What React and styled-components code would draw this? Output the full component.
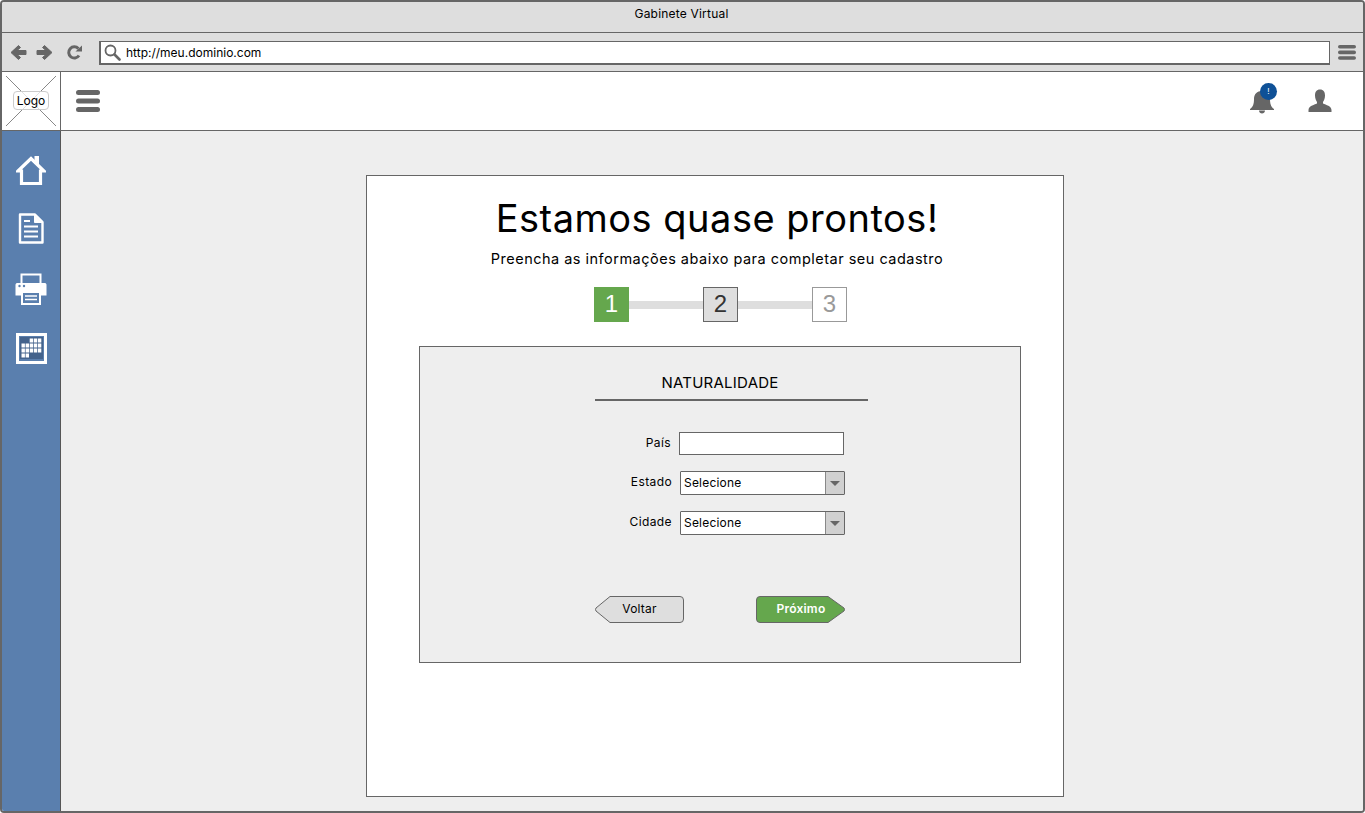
import React from "react";
import styled, { createGlobalStyle } from "styled-components";

const Global = createGlobalStyle`
  html, body { margin: 0; padding: 0; background: #fff; }
  body { font-family: "Inter", "Noto Sans", sans-serif; color: #000; }
  * { box-sizing: border-box; }
`;

const Browser = styled.div`
  width: 1365px;
  height: 813px;
  border: 2px solid #666;
  border-radius: 4px;
  display: flex;
  flex-direction: column;
  overflow: hidden;
`;
const TitleBar = styled.div`
  height: 31px;
  flex: none;
  background: #dedede;
  border-bottom: 1px solid #666;
  display: flex;
  justify-content: center;
  align-items: center;
  padding: 0 2px 7px 0;
  font-size: 12px;
  letter-spacing: 0.2px;
`;
const Toolbar = styled.div`
  height: 39px;
  flex: none;
  background: #dedede;
  border-bottom: 1px solid #666;
  display: flex;
  align-items: center;
  padding: 1px 0 0 8px;
`;
const NavIcons = styled.div`
  display: flex;
  align-items: center;
  gap: 9px;
  width: 89px;
`;
const ReloadSlot = styled.div`
  display: flex;
  margin-left: 4px;
`;
const AddressBar = styled.div`
  width: 1231px;
  height: 24px;
  background: #fff;
  border: 2px solid #666;
  border-width: 1px 1px 2px 2px;
  display: flex;
  align-items: center;
  gap: 5px;
  padding: 1px 0 0 3px;
  font-size: 12px;
`;
const MenuSlot = styled.div`
  margin-left: 8px;
  display: flex;
`;
const Header = styled.div`
  height: 59px;
  flex: none;
  background: #fff;
  border-bottom: 1px solid #666;
  display: flex;
  align-items: center;
`;
const LogoBox = styled.div`
  position: relative;
  width: 59px;
  height: 58px;
  flex: none;
  border-right: 1px solid #666;
  display: flex;
  justify-content: center;
  align-items: center;
`;
const LogoCross = styled.svg`
  position: absolute;
  left: 4px;
  top: 4px;
`;
const LogoLabel = styled.div`
  position: relative;
  width: 36px;
  height: 19px;
  margin-bottom: 1px;
  border: 1px solid #ccc;
  border-radius: 4px;
  background: rgba(255, 255, 255, 0.75);
  font-size: 12px;
  text-align: center;
  line-height: 17px;
`;
const HeaderMenu = styled.div`
  margin-left: 15px;
  display: flex;
  flex: 1;
`;
const HeaderActions = styled.div`
  display: flex;
  align-items: center;
  gap: 34px;
  padding-right: 31px;
`;
const BellWrap = styled.div`
  position: relative;
  width: 24px;
  height: 26px;
`;
const Badge = styled.span`
  position: absolute;
  left: 10px;
  top: -5px;
  width: 17px;
  height: 17px;
  border-radius: 50%;
  background: #0f5197;
  color: #fff;
  font-size: 8px;
  line-height: 17px;
  text-align: center;
`;
const Body = styled.div`
  flex: 1;
  display: flex;
  min-height: 0;
`;
const Sidebar = styled.div`
  width: 59px;
  flex: none;
  background: #5a7fae;
  border-right: 1px solid #555;
  display: flex;
  flex-direction: column;
  align-items: center;
  padding: 24px 0 0 0;
`;
const SideIcon = styled.div`
  height: ${(p) => p.$h}px;
  display: flex;
  justify-content: center;
`;
const Content = styled.div`
  flex: 1;
  background: #eee;
  padding: 44px 0 0 305px;
`;
const Card = styled.div`
  width: 698px;
  height: 622px;
  background: #fff;
  border: 1px solid #666;
  display: flex;
  flex-direction: column;
`;
const Heading = styled.h1`
  margin: 17px 0 0 4px;
  font-size: 38px;
  line-height: 50px;
  font-weight: 400;
  text-align: center;
  letter-spacing: 0.5px;
`;
const Subtitle = styled.p`
  margin: 6px 0 0 4px;
  font-size: 14.5px;
  line-height: 20px;
  text-align: center;
  letter-spacing: 0.49px;
`;
const Stepper = styled.div`
  margin: 18px 0 0 227px;
  display: flex;
  align-items: center;
`;
const Step = styled.div`
  width: 35px;
  height: 35px;
  flex: none;
  display: flex;
  justify-content: center;
  align-items: center;
  padding-bottom: 2px;
  font-size: 24px;
  font-family: "Liberation Sans", sans-serif;
  background: ${(p) => p.$bg};
  color: ${(p) => p.$color};
  border: 1px solid ${(p) => p.$border};
`;
const StepLine = styled.div`
  width: 74px;
  height: 8px;
  flex: none;
  background: #dedede;
`;
const Panel = styled.div`
  margin: 24px 0 0 52px;
  width: 602px;
  height: 317px;
  background: #eee;
  border: 1px solid #666;
  display: flex;
  flex-direction: column;
  align-items: flex-start;
  padding: 0 0 0 175px;
`;
const PanelTitle = styled.div`
  width: 273px;
  height: 54px;
  border-bottom: 2px solid #666;
  padding: 26px 23px 0 0;
  font-size: 15px;
  line-height: 20px;
  text-align: center;
  letter-spacing: 0.25px;
`;
const Row = styled.div`
  display: flex;
  align-items: flex-start;
  margin-top: ${(p) => p.$top}px;
`;
const Label = styled.label`
  width: ${(p) => p.$w}px;
  text-align: right;
  padding-top: 2px;
  font-size: 12px;
  line-height: 17px;
  letter-spacing: 0.4px;
`;
const TextInput = styled.div`
  margin-left: 8px;
  width: 165px;
  height: 23px;
  background: #fff;
  border: 1px solid #666;
`;
const Select = styled.div`
  margin-left: 8px;
  width: 165px;
  height: 24px;
  background: #fff;
  border: 1px solid #666;
  border-radius: 1px;
  display: flex;
  align-items: stretch;
  font-size: 12px;
  letter-spacing: 0.2px;
`;
const SelectText = styled.div`
  flex: 1;
  padding-left: 3px;
  line-height: 21px;
`;
const SelectArrow = styled.div`
  width: 19px;
  background: #d0d0d0;
  border-left: 1px solid #888;
  display: flex;
  justify-content: center;
  align-items: center;
`;
const Buttons = styled.div`
  margin-top: 61px;
  width: 251px;
  display: flex;
  justify-content: space-between;
`;
const ArrowButton = styled.div`
  position: relative;
  width: ${(p) => (p.$back ? 89 : 90)}px;
  height: 27px;
  display: flex;
  justify-content: center;
  align-items: center;
  padding: 0 0 2px 0;
  font-size: 12px;
  letter-spacing: 0.2px;
  color: ${(p) => (p.$back ? "#000" : "#fff")};
  font-weight: ${(p) => (p.$back ? 400 : 600)};
`;
const ButtonShape = styled.svg`
  position: absolute;
  left: 0;
  top: 0;
`;
const ButtonText = styled.span`
  position: relative;
`;

const Menu = ({ w = 24, h = 22, bar = 5, gap = 3.5 }) => (
  <svg width={w} height={h} viewBox={`0 0 ${w} ${h}`}>
    {[0, 1, 2].map((i) => (
      <rect key={i} x="0" y={i * (bar + gap)} width={w} height={bar} rx={bar / 2} fill="#666" />
    ))}
  </svg>
);

const ArrowNav = ({ flip }) => (
  <svg width="17" height="17" viewBox="0 0 17 17" style={flip ? { transform: "scaleX(-1)" } : undefined}>
    <path d="M8.5 1.5 L1 8.5 L8.5 15.5 L10.5 13.5 L7 10.5 H16 V6.5 H7 L10.5 3.5 Z" fill="#666" stroke="#666" strokeLinejoin="round" />
  </svg>
);

const Reload = () => (
  <svg width="17" height="17" viewBox="0 0 17 17">
    <path d="M13 11.5 A5.6 5.6 0 1 1 12.4 4.6" fill="none" stroke="#666" strokeWidth="3" />
    <path d="M9.5 7.5 H16 V1.5 Z" fill="#666" />
  </svg>
);

const Search = () => (
  <svg width="17" height="17" viewBox="0 0 17 17">
    <circle cx="6.5" cy="6.5" r="5" fill="none" stroke="#666" strokeWidth="1.8" />
    <path d="M10.5 10.5 L15.5 15.5" stroke="#666" strokeWidth="2.6" strokeLinecap="round" />
  </svg>
);

const Bell = () => (
  <svg width="24" height="26" viewBox="0 0 24 26">
    <path d="M0 21 C3 19 4 16 4 11 C4 6 7 3 12 3 C17 3 20 6 20 11 C20 16 21 19 24 21 V22 H0 Z" fill="#666" />
    <path d="M9 22.5 H15 C15 24.5 13.5 25.5 12 25.5 C10.5 25.5 9 24.5 9 22.5 Z" fill="#666" />
  </svg>
);

const User = () => (
  <svg width="24" height="24" viewBox="0 0 24 24">
    <path d="M12 0.5 C15.5 0.5 17 3 17 6.5 C17 9.5 16 11.5 15 13 V14.5 C18 16 23.5 17 23.5 21 V23 H0.5 V21 C0.5 17 6 16 9 14.5 V13 C8 11.5 7 9.5 7 6.5 C7 3 8.5 0.5 12 0.5 Z" fill="#666" />
  </svg>
);

const Home = () => (
  <svg width="30" height="31" viewBox="0 0 30 31">
    <path d="M18.5 1 H23 V9 H18.5 Z" fill="#fff" />
    <path d="M2 16 L15 3.5 L28 16 H24.5 V28.5 H5.5 V16 Z" fill="none" stroke="#fff" strokeWidth="3.2" strokeLinejoin="miter" />
  </svg>
);

const Doc = () => (
  <svg width="26" height="31" viewBox="0 0 26 31">
    <path d="M2 1.5 H17 L24.5 9 V29.5 H2 Z" fill="none" stroke="#fff" strokeWidth="2.4" strokeLinejoin="round" />
    <path d="M16.5 2 V9.5 H24 Z" fill="#fff" stroke="#fff" strokeWidth="1" />
    <path d="M6 8 H12 M6 13.5 H20 M6 18.5 H20 M6 23.5 H20" stroke="#fff" strokeWidth="2" />
  </svg>
);

const Printer = () => (
  <svg width="32" height="32" viewBox="0 0 32 32">
    <path d="M6.5 11 V1.5 H25.5 V11" fill="none" stroke="#fff" strokeWidth="2" />
    <path d="M2 10 H30 C31 10 31.5 11 31.5 12 V22.5 H26 V18 H6 V22.5 H0.5 V12 C0.5 11 1 10 2 10 Z" fill="#fff" />
    <rect x="7" y="19" width="18" height="12" fill="none" stroke="#fff" strokeWidth="2" />
    <path d="M10 23 H22 M10 26.5 H22" stroke="#fff" strokeWidth="1.6" />
    <circle cx="4.5" cy="13" r="1.2" fill="#5a7fae" />
    <circle cx="9" cy="13" r="1.2" fill="#5a7fae" />
  </svg>
);

const Calendar = () => {
  const cells = [
    [2, 3, 4],
    [0, 1, 2, 3, 4],
    [0, 1, 2, 3, 4],
    [0, 1],
  ];
  return (
    <svg width="31" height="31" viewBox="0 0 31 31">
      <rect x="1.5" y="1.5" width="28" height="28" fill="none" stroke="#fff" strokeWidth="3" />
      <rect x="4" y="4" width="23" height="22" fill="#44638c" />
      {cells.map((row, r) =>
        row.map((c) => (
          <rect key={`${r}-${c}`} x={5.5 + c * 4.1} y={5.5 + r * 5} width="3.4" height="4" fill="#fff" />
        ))
      )}
    </svg>
  );
};

const CaretDown = () => (
  <svg width="10" height="5" viewBox="0 0 10 5">
    <path d="M0 0 H10 L5 5 Z" fill="#666" />
  </svg>
);

function App() {
  return (
    <>
      <Global />
      <Browser>
        <TitleBar>Gabinete Virtual</TitleBar>
        <Toolbar>
          <NavIcons>
            <ArrowNav />
            <ArrowNav flip />
            <ReloadSlot>
              <Reload />
            </ReloadSlot>
          </NavIcons>
          <AddressBar>
            <Search />
            http://meu.dominio.com
          </AddressBar>
          <MenuSlot>
            <Menu w={18} h={15} bar={3.6} gap={2} />
          </MenuSlot>
        </Toolbar>
        <Header>
          <LogoBox>
            <LogoCross width="50" height="50" viewBox="0 0 50 50">
              <path d="M0 0 L50 50 M50 0 L0 50" stroke="#888" strokeWidth="1" />
            </LogoCross>
            <LogoLabel>Logo</LogoLabel>
          </LogoBox>
          <HeaderMenu>
            <Menu />
          </HeaderMenu>
          <HeaderActions>
            <BellWrap>
              <Bell />
              <Badge>!</Badge>
            </BellWrap>
            <User />
          </HeaderActions>
        </Header>
        <Body>
          <Sidebar>
            <SideIcon $h={58}><Home /></SideIcon>
            <SideIcon $h={60}><Doc /></SideIcon>
            <SideIcon $h={60}><Printer /></SideIcon>
            <SideIcon $h={40}><Calendar /></SideIcon>
          </Sidebar>
          <Content>
            <Card>
              <Heading>Estamos quase prontos!</Heading>
              <Subtitle>Preencha as informações abaixo para completar seu cadastro</Subtitle>
              <Stepper>
                <Step $bg="#65a74d" $color="#fff" $border="#65a74d">1</Step>
                <StepLine />
                <Step $bg="#dedede" $color="#333" $border="#666">2</Step>
                <StepLine />
                <Step $bg="#fff" $color="#999" $border="#999">3</Step>
              </Stepper>
              <Panel>
                <PanelTitle>NATURALIDADE</PanelTitle>
                <Row $top={31}>
                  <Label $w={76}>País</Label>
                  <TextInput />
                </Row>
                <Row $top={16}>
                  <Label $w={77}>Estado</Label>
                  <Select>
                    <SelectText>Selecione</SelectText>
                    <SelectArrow><CaretDown /></SelectArrow>
                  </Select>
                </Row>
                <Row $top={16}>
                  <Label $w={77}>Cidade</Label>
                  <Select>
                    <SelectText>Selecione</SelectText>
                    <SelectArrow><CaretDown /></SelectArrow>
                  </Select>
                </Row>
                <Buttons>
                  <ArrowButton $back>
                    <ButtonShape width="89" height="27" viewBox="0 0 89 27">
                      <path d="M15 0.5 H85 Q88.5 0.5 88.5 4 V23 Q88.5 26.5 85 26.5 H15 L1 15 Q0 13.5 1 12 Z" fill="#dedede" stroke="#666" />
                    </ButtonShape>
                    <ButtonText>Voltar</ButtonText>
                  </ArrowButton>
                  <ArrowButton>
                    <ButtonShape width="90" height="27" viewBox="0 0 90 27">
                      <path d="M4 0.5 H72 L88 12 Q89 13.5 88 15 L72 26.5 H4 Q0.5 26.5 0.5 23 V4 Q0.5 0.5 4 0.5 Z" fill="#65a74d" stroke="#666" />
                    </ButtonShape>
                    <ButtonText>Próximo</ButtonText>
                  </ArrowButton>
                </Buttons>
              </Panel>
            </Card>
          </Content>
        </Body>
      </Browser>
    </>
  );
}

export default App;
